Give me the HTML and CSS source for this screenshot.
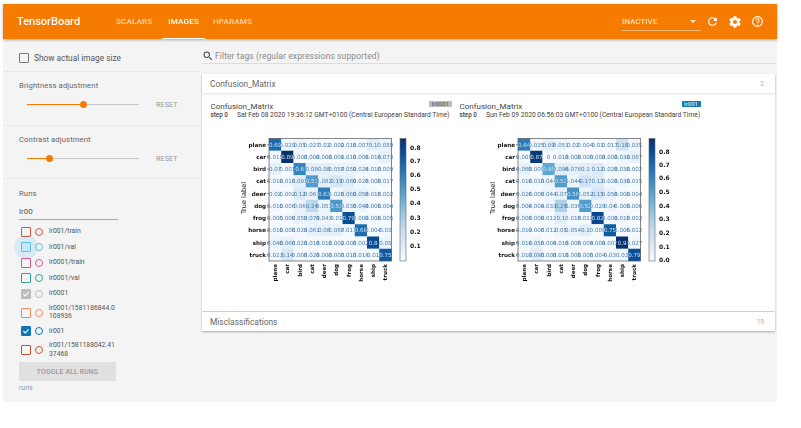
FILE: index.html
```html
<!DOCTYPE html>
<html lang="en">
<head>
<meta charset="utf-8">
<title>TensorBoard</title>
<link rel="stylesheet" href="styles.css">
</head>
<body>
<div class="app">
  <header class="topbar">
    <div class="brand">TensorBoard</div>
    <nav class="tabs">
      <span class="tab">SCALARS</span>
      <span class="tab active">IMAGES</span>
      <span class="tab">HPARAMS</span>
    </nav>
    <div class="top-actions">
      <div class="select"><span>INACTIVE</span><i class="caret"></i></div>
      <svg class="icon refresh" viewBox="0 0 24 24"><path d="M17.65 6.35A7.96 7.96 0 0 0 12 4a8 8 0 1 0 7.73 10h-2.08A6 6 0 1 1 12 6c1.66 0 3.14.69 4.22 1.78L13 11h7V4l-2.35 2.35z"/></svg>
      <svg class="icon gear" viewBox="0 0 24 24"><path d="M19.43 12.98c.04-.32.07-.64.07-.98s-.03-.66-.07-.98l2.11-1.65c.19-.15.24-.42.12-.64l-2-3.46c-.12-.22-.39-.3-.61-.22l-2.49 1c-.52-.4-1.08-.73-1.69-.98l-.38-2.65A.49.49 0 0 0 14 2h-4c-.25 0-.46.18-.49.42l-.38 2.65c-.61.25-1.17.59-1.69.98l-2.49-1c-.23-.09-.49 0-.61.22l-2 3.46c-.13.22-.07.49.12.64l2.11 1.65c-.04.32-.07.65-.07.98s.03.66.07.98l-2.11 1.65c-.19.15-.24.42-.12.64l2 3.46c.12.22.39.3.61.22l2.49-1c.52.4 1.08.73 1.69.98l.38 2.65c.03.24.24.42.49.42h4c.25 0 .46-.18.49-.42l.38-2.65c.61-.25 1.17-.59 1.69-.98l2.49 1c.23.09.49 0 .61-.22l2-3.46c.12-.22.07-.49-.12-.64l-2.11-1.65zM12 15.5a3.5 3.5 0 1 1 0-7 3.5 3.5 0 0 1 0 7z"/></svg>
      <svg class="icon help" viewBox="0 0 24 24"><path d="M11 18h2v-2h-2v2zm1-16a10 10 0 1 0 0 20 10 10 0 0 0 0-20zm0 18a8 8 0 1 1 0-16 8 8 0 0 1 0 16zm0-14a4 4 0 0 0-4 4h2a2 2 0 1 1 4 0c0 2-3 1.75-3 5h2c0-2.25 3-2.5 3-5a4 4 0 0 0-4-4z"/></svg>
    </div>
  </header>
  <div class="main">
    <aside class="sidebar">
      <section class="side-sec show-size">
        <span class="box"></span><span class="side-label">Show actual image size</span>
      </section>
      <section class="side-sec adjust">
        <div class="side-title">Brightness adjustment</div>
        <div class="slider-row">
          <div class="slider"><div class="fill fill-b"></div><div class="thumb"></div></div>
          <span class="reset">RESET</span>
        </div>
      </section>
      <section class="side-sec adjust">
        <div class="side-title">Contrast adjustment</div>
        <div class="slider-row">
          <div class="slider"><div class="fill fill-c"></div><div class="thumb"></div></div>
          <span class="reset">RESET</span>
        </div>
      </section>
      <section class="runs">
        <div class="side-title">Runs</div>
        <div class="run-filter">lr00</div>
        <ul class="run-list">
          <li class="run c-red"><span class="box"></span><span class="dot"></span><span class="run-name">lr001/train</span></li>
          <li class="run c-sky hovered"><span class="box"></span><span class="dot"></span><span class="run-name">lr001/val</span></li>
          <li class="run c-pink"><span class="box"></span><span class="dot"></span><span class="run-name">lr0001/train</span></li>
          <li class="run c-teal"><span class="box"></span><span class="dot"></span><span class="run-name">lr0001/val</span></li>
          <li class="run c-grey checked"><span class="box"><svg viewBox="0 0 24 24"><path d="M4 12.5l5.5 5.5L20 7" /></svg></span><span class="dot"></span><span class="run-name">lr0001</span></li>
          <li class="run two c-orange"><span class="box"></span><span class="dot"></span><span class="run-name">lr0001/1581186844.0<br>108936</span></li>
          <li class="run c-blue checked"><span class="box"><svg viewBox="0 0 24 24"><path d="M4 12.5l5.5 5.5L20 7" /></svg></span><span class="dot"></span><span class="run-name">lr001</span></li>
          <li class="run two c-red2"><span class="box"></span><span class="dot"></span><span class="run-name">lr001/1581188042.41<br>37468</span></li>
        </ul>
        <div class="toggle">TOGGLE ALL RUNS</div>
        <div class="runs-foot">runs</div>
      </section>
    </aside>
    <main class="content">
      <div class="filter">
        <svg class="search" viewBox="0 0 24 24"><path d="M15.5 14h-.79l-.28-.27A6.47 6.47 0 0 0 16 9.5 6.5 6.5 0 1 0 9.5 16c1.61 0 3.09-.59 4.23-1.57l.27.28v.79l5 4.99L20.49 19l-4.99-5zm-6 0a4.5 4.5 0 1 1 0-9 4.5 4.5 0 0 1 0 9z"/></svg>
        <span>Filter tags (regular expressions supported)</span>
      </div>
      <section class="pane">
        <div class="pane-head"><span>Confusion_Matrix</span><span class="count">2</span></div>
        <div class="pane-body">
          <article class="sample">
            <div class="sample-head"><span class="sample-title">Confusion_Matrix</span><span class="chip chip-grey">lr0001</span></div>
            <div class="sample-meta"><b>step 0</b><span>Sat Feb 08 2020 19:36:12 GMT+0100 (Central European Standard Time)</span></div>
            <svg class="matrix" id="m1" width="230" height="176"></svg>
          </article>
          <article class="sample">
            <div class="sample-head"><span class="sample-title">Confusion_Matrix</span><span class="chip chip-blue">lr001</span></div>
            <div class="sample-meta"><b>step 0</b><span>Sun Feb 09 2020 06:56:03 GMT+0100 (Central European Standard Time)</span></div>
            <svg class="matrix" id="m2" width="230" height="176"></svg>
          </article>
        </div>
      </section>
      <section class="pane">
        <div class="pane-head"><span>Misclassifications</span><span class="count">19</span></div>
      </section>
    </main>
  </div>
</div>
<script src="matrix.js"></script>
</body>
</html>
```

FILE: styles.css
```css
* { box-sizing: border-box; }
html, body { margin: 0; padding: 0; background: #fff; }
body { font-family: Roboto, "Liberation Sans", sans-serif; color: #444; overflow: hidden; }
.app { width: 774px; height: 398px; margin: 4px 0 0 3px; background: #f4f4f4; display: flex; flex-direction: column; filter: blur(.45px); }

.topbar { height: 35px; flex: none; background: #f57c00; color: #fff; display: flex; align-items: center; box-shadow: 0 1px 3px rgba(0,0,0,.3); position: relative; z-index: 2; }
.brand { font-size: 11px; font-weight: 500; margin-left: 14px; width: 91px; white-space: nowrap; }
.tabs { display: flex; height: 100%; }
.tab { font-size: 8px; font-weight: 500; letter-spacing: .2px; color: rgba(255,255,255,.7); padding: 0 8px; display: flex; align-items: center; height: 100%; }
.tab.active { color: #fff; border-bottom: 1px solid #fff; padding: 1px 6px 0; margin-left: 2px; }
.top-actions { margin-left: auto; display: flex; align-items: center; padding-right: 13px; }
.select { width: 79px; height: 16px; border-bottom: 1px solid rgba(255,255,255,.45); font-size: 8px; font-weight: 500; color: rgba(255,255,255,.75); display: flex; align-items: center; justify-content: space-between; padding: 0 5px 1px 0; position: relative; top: 1px; }
.caret { width: 0; height: 0; border: 3px solid transparent; border-top: 3px solid rgba(255,255,255,.85); border-bottom: 0; }
.icon { width: 12px; height: 12px; fill: #fff; margin-left: 9px; }
.icon.refresh { width: 13px; height: 13px; margin-left: 5px; }
.icon.gear { width: 14px; height: 14px; margin-left: 9px; }
.icon.help { width: 13px; height: 13px; margin-left: 9px; }

.main { flex: 1; display: flex; min-height: 0; }
.sidebar { width: 197px; flex: none; }
.side-sec { border-bottom: 1px solid #e9e9e9; padding: 0 16px; }
.show-size { height: 33px; display: flex; align-items: center; padding-top: 5px; }
.show-size .box { width: 10px; height: 10px; border: 1px solid #777; border-radius: 1px; margin-right: 5px; }
.side-label { font-size: 8.3px; color: #555; white-space: nowrap; }
.side-title { font-size: 7.7px; color: #666; letter-spacing: .1px; }
.adjust { height: 53.5px; padding-top: 9px; }
.slider-row { display: flex; align-items: center; margin-top: 10px; }
.slider { width: 112px; height: 1px; margin-left: 8px; background: #c8c8c8; position: relative; display: flex; }
.fill { height: 1px; background: #f57c00; }
.fill-b { width: 56px; }
.fill-c { width: 22px; }
.thumb { width: 7px; height: 7px; margin: -3px 0 0 -3px; border-radius: 50%; background: #f57c00; flex: none; }
.reset { font-size: 7.2px; color: #9a9a9a; margin-left: 17px; letter-spacing: .1px; }

.runs { padding: 10px 16px 0; }
.run-filter { font-size: 8px; color: #555; margin-top: 9px; height: 13px; width: 99px; border-bottom: 1px solid #aaa; }
.run-list { list-style: none; margin: 4px 0 1px; padding: 0 0 0 2px; width: 108px; }
.run { display: flex; align-items: center; height: 15.5px; font-size: 6.8px; color: #555; position: relative; }
.run.two { height: 22px; }
.run .box { width: 10px; height: 10px; border: 1px solid var(--c); border-radius: 1px; flex: none; display: flex; position: relative; }
.run .box svg { width: 100%; height: 100%; fill: none; stroke: #fff; stroke-width: 3.5; }
.run .dot { width: 8px; height: 8px; border: 1px solid var(--c); border-radius: 50%; margin: 0 6px 0 4px; flex: none; position: relative; }
.run-name { width: 72px; white-space: nowrap; line-height: 8.5px; position: relative; top: -.5px; }
.checked .box { background: var(--c); }
.hovered::before { content: ""; position: absolute; left: -7px; top: -4.5px; width: 24px; height: 24px; border-radius: 50%; background: rgba(3,169,244,.12); }
.hovered .box { background: #c6e7f7; }
.c-red { --c: #d9553c; } .c-sky { --c: #5cbde8; } .c-pink { --c: #e0558a; } .c-teal { --c: #33a594; }
.c-grey { --c: #bdbdbd; } .c-orange { --c: #f58a63; } .c-blue { --c: #0e76b8; } .c-red2 { --c: #cf5036; }
.toggle { width: 97px; height: 19px; background: #e0e0e0; border-radius: 1px; color: #9a9a9a; font-size: 6.8px; font-weight: 500; letter-spacing: .2px; display: flex; align-items: center; justify-content: center; }
.runs-foot { font-size: 7px; color: #999; margin-top: 3px; }

.content { flex: 1; min-width: 0; padding: 0 2px 0 1px; margin-left: 1px; }
.filter { height: 25px; padding-top: 9px; border-bottom: 1px solid #dcdcdc; display: flex; align-items: center; font-size: 8.5px; color: #8a8a8a; letter-spacing: .1px; }
.search { width: 12px; height: 12px; fill: #444; margin-right: 1px; flex: none; }
.pane { background: #fff; box-shadow: 0 1px 2px rgba(0,0,0,.2); }
.filter + .pane { margin-top: 10px; }
.pane + .pane { margin-top: 1px; }
.pane-head { height: 19px; padding: 0 11px 0 8px; display: flex; align-items: center; justify-content: space-between; font-size: 8.4px; color: #666; box-shadow: 0 1px 2px rgba(0,0,0,.12); }
.count { font-size: 6.5px; color: #aaa; }
.pane-body { height: 218px; display: flex; padding: 9px 0 0 8.5px; }
.sample { width: 249px; flex: none; }
.sample-head { width: 241px; display: flex; justify-content: space-between; align-items: flex-start; font-size: 8px; color: #444; height: 9px; line-height: 10px; }
.chip { font-size: 6px; font-weight: 500; height: 6px; line-height: 6px; padding: 0 2.5px; border-radius: 1px; margin-top: -1.5px; }
.chip-grey { background: #bdbdbd; color: #666; }
.chip-blue { background: #0e76b8; color: #cfe6f5; }
.sample-meta { font-size: 6.7px; color: #444; display: flex; gap: 9px; white-space: nowrap; line-height: 9px; }
.sample-meta b { font-weight: 500; font-size: 6.3px; }
.matrix { display: block; margin-top: 10px; filter: blur(.3px); }
.matrix text { font-family: "DejaVu Sans", sans-serif; }
.matrix .lab { font-size: 5.6px; font-weight: 700; fill: #111; }
.matrix .ylab { font-size: 6.6px; font-weight: 400; text-anchor: middle; }
.matrix .val { font-size: 5.6px; text-anchor: middle; }
.matrix .tick { font-size: 6px; font-weight: 700; fill: #111; }
```

FILE: matrix.js
```js
var names = ["plane","car","bird","cat","deer","dog","frog","horse","ship","truck"];
var left = [
 ["0.69","0.029","0.05","0.027","0.02","0.002","0.016","0.007","0.1","0.059"],
 ["0.015","0.89","0.008","0.008","0.008","0.001","0.018","0.008","0.016","0.073"],
 ["0.07","0.001","0.6","0.08","0.08","0.057","0.059","0.024","0.018","0.009"],
 ["0.018","0.018","0.091","0.51","0.082","0.15","0.089","0.028","0.008","0.017"],
 ["0.02","0.002","0.12","0.063","0.63","0.026","0.069","0.058","0.018","0.002"],
 ["0.018","0.006","0.06","0.24","0.051","0.53","0.038","0.048","0.008","0.004"],
 ["0.005","0.008","0.058","0.078","0.043","0.01","0.79","0.009","0.008","0.005"],
 ["0.018","0.008","0.028","0.061","0.08","0.067","0.017","0.68","0.004","0.03"],
 ["0.048","0.068","0.028","0.018","0.018","0.002","0.008","0.002","0.8","0.05"],
 ["0.023","0.14","0.008","0.028","0.008","0.008","0.018","0.018","0.01","0.75"]];
var right = [
 ["0.64","0.035","0.09","0.051","0.02","0.004","0.01","0.017","0.18","0.035"],
 ["0.009","0.87","0","0.018","0.008","0.008","0.008","0.008","0.038","0.067"],
 ["0.068","0.009","0.48","0.096","0.078","0.1","0.12","0.028","0.038","0.002"],
 ["0.018","0.018","0.044","0.52","0.044","0.17","0.12","0.028","0.038","0.015"],
 ["0.026","0.006","0.044","0.07","0.56","0.052","0.15","0.058","0.008","0.004"],
 ["0.004","0.004","0.033","0.29","0.036","0.52","0.028","0.04","0.008","0.006"],
 ["0.008","0.008","0.012","0.1","0.018","0.012","0.82","0.008","0.018","0.002"],
 ["0.019","0.008","0.012","0.05","0.054","0.1","0.009","0.75","0.006","0.012"],
 ["0.018","0.056","0.004","0.018","0.008","0.004","0.009","0.007","0.9","0.027"],
 ["0.018","0.098","0.008","0.018","0.008","0.006","0.004","0.03","0.03","0.79"]];
var stops = [[247,251,255],[222,235,247],[198,219,239],[158,202,225],[107,174,214],[66,146,198],[33,113,181],[8,81,156],[8,48,107]];
function blues(t) {
  t = Math.max(0, Math.min(1, t)) * 8;
  var i = Math.min(7, Math.floor(t)), f = t - i, a = stops[i], b = stops[i + 1];
  return "rgb(" + [0, 1, 2].map(function (k) { return Math.round(a[k] + (b[k] - a[k]) * f); }).join(",") + ")";
}
var CELL = 12.25, X0 = 58, Y0 = 8.5, NS = "http://www.w3.org/2000/svg";
function el(parent, tag, attrs, text) {
  var e = document.createElementNS(NS, tag);
  for (var k in attrs) e.setAttribute(k, attrs[k]);
  if (text !== undefined) e.textContent = text;
  parent.appendChild(e);
  return e;
}
function draw(id, data, max, ticks) {
  var svg = document.getElementById(id);
  var size = CELL * 10, gid = id + "g";
  var grad = el(el(svg, "defs", {}), "linearGradient", { id: gid, x1: 0, y1: 1, x2: 0, y2: 0 });
  stops.forEach(function (s, i) {
    el(grad, "stop", { offset: i / 8, "stop-color": "rgb(" + s.join(",") + ")" });
  });
  data.forEach(function (row, r) {
    var y = Y0 + r * CELL;
    el(svg, "text", { "class": "lab", x: X0 - 3, y: y + CELL / 2 + 2, "text-anchor": "end" }, names[r]);
    el(svg, "line", { x1: X0 - 2, x2: X0, y1: y + CELL / 2, y2: y + CELL / 2, stroke: "#222", "stroke-width": .5 });
    row.forEach(function (v, c) {
      var n = parseFloat(v), x = X0 + c * CELL;
      el(svg, "rect", { x: x, y: y, width: CELL + .1, height: CELL + .1, fill: blues(n / max) });
    });
  });
  data.forEach(function (row, r) {
    row.forEach(function (v, c) {
      var n = parseFloat(v);
      el(svg, "text", { "class": "val", x: X0 + (c + .5) * CELL, y: Y0 + (r + .5) * CELL + 2, fill: n / max > .5 ? "#cfe2f3" : "#4a7fb0" }, v);
    });
  });
  el(svg, "rect", { x: X0, y: Y0, width: size, height: size, fill: "none", stroke: "#555", "stroke-width": .7 });
  names.forEach(function (n, c) {
    var x = X0 + (c + .5) * CELL;
    el(svg, "text", { "class": "lab", transform: "translate(" + (x + 2) + "," + (Y0 + size + 3) + ") rotate(-90)", "text-anchor": "end" }, n);
  });
  el(svg, "text", { "class": "lab ylab", transform: "translate(35,68) rotate(-90)" }, "True label");
  el(svg, "rect", { x: 189, y: Y0, width: 6, height: size, fill: "url(#" + gid + ")", stroke: "#666", "stroke-width": .6 });
  ticks.forEach(function (t) {
    el(svg, "text", { "class": "tick", x: 199, y: t[1] - 130 + 2 }, t[0]);
  });
}
draw("m1", left, .89, [["0.8",148],["0.7",161],["0.6",175],["0.5",189],["0.4",203],["0.3",218],["0.2",232],["0.1",246]]);
draw("m2", right, .9, [["0.8",152],["0.7",165],["0.6",178],["0.5",192],["0.4",206],["0.3",219],["0.2",233],["0.1",247],["0.0",260]]);
```
